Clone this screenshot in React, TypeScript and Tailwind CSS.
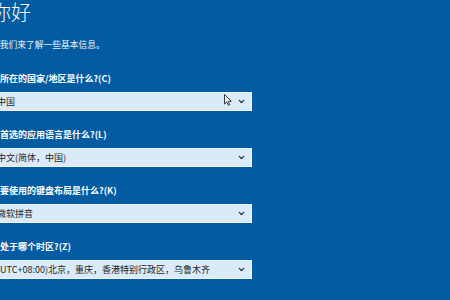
import { ChevronDown } from 'lucide-react'

const fields = [
  { label: '你所在的国家/地区是什么?(C)', value: '中国' },
  { label: '你首选的应用语言是什么?(L)', value: '中文(简体，中国)' },
  { label: '你要使用的键盘布局是什么?(K)', value: '微软拼音' },
  { label: '你处于哪个时区?(Z)', value: '(UTC+08:00)北京，重庆，香港特别行政区，乌鲁木齐' },
]

function Select({ value, pointer }: { value: string; pointer?: boolean }) {
  return (
    <div className="relative flex h-[19px] items-center justify-between border border-[#eef6fc] bg-[#dbeaf7] pl-[5px] pr-[5px] text-[9px] text-[#1d1d1d]">
      <span className="leading-none whitespace-nowrap">{value}</span>
      <ChevronDown className="h-[9px] w-[9px] text-[#1a2a44]" strokeWidth={3.5} />
      {pointer && (
        // mouse cursor hovering the first dropdown
        <svg className="absolute left-[232px] top-[1px] h-[12px] w-[8px]" viewBox="0 0 8 12">
          <path d="M0.5 0.5 L0.5 10 L2.8 7.8 L4.4 11.3 L5.8 10.7 L4.3 7.3 L7.3 7.3 Z" fill="#f4f8fb" stroke="#222" strokeWidth="0.9" strokeLinejoin="round" />
        </svg>
      )}
    </div>
  )
}

export default function App() {
  return (
    <div className="h-[300px] w-[450px] overflow-hidden bg-[#035ba1] font-['Noto_Sans_CJK_SC','Noto_Sans',sans-serif] text-white">
      <div className="ml-[-9px] w-[261px]">
        <h1 className="flex h-[24px] items-center text-[20px] font-light leading-none">你好</h1>
        <p className="mt-[15px] flex h-[12px] items-center text-[8.75px] leading-none text-[#eaf3fb]">
          让我们来了解一些基本信息。
        </p>

        <div className="mt-[21px] flex flex-col gap-[17px]">
          {fields.map((f, i) => (
            <div key={f.label} className="flex flex-col gap-[8px]">
              <div className="flex h-[12px] items-center text-[9px] font-bold leading-none">{f.label}</div>
              <Select value={f.value} pointer={i === 0} />
            </div>
          ))}
        </div>
      </div>
    </div>
  )
}
